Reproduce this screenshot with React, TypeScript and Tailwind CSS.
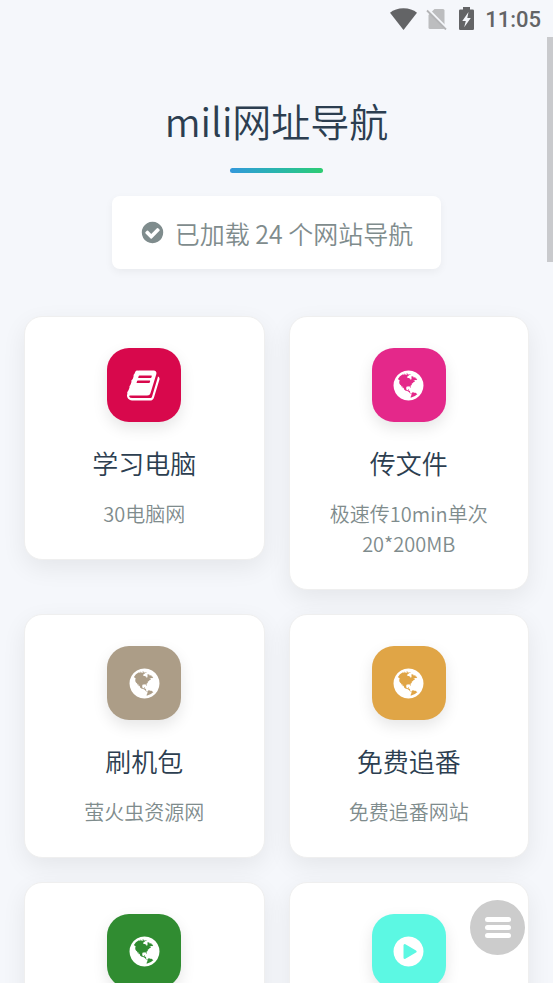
import React from "react";

type IconName = "book" | "globe" | "play" | "check";

const paths: Record<IconName, string> = {
  book: "M1639 478q40 57 18 129l-275 906q-19 64-76.5 107.5t-122.5 43.5h-923q-77 0-148.5-53.5t-99.5-131.5q-24-67-2-127 0-4 3-27t4-37q1-8-3-21.5t-3-19.5q2-11 8-21t16.5-23.5 16.5-23.5q23-38 45-91.5t30-91.5q3-10 .5-30t-.5-28q3-11 17-28t17-23q21-36 42-92t25-90q1-9-2.5-32t.5-28q4-13 22-30.5t22-22.5q19-26 42.5-84.5t27.5-96.5q1-8-3-25.5t-2-26.5q2-8 9-18t18-23 17-21q8-12 16.5-30.5t15-35 16-36 19.5-32 26.5-23.5 36-11.5 47.5 5.5l-1 3q38-9 51-9h761q74 0 114 56t18 130l-274 906q-36 119-71.5 153.5t-128.5 34.5h-869q-27 0-38 15-11 16-1 43 24 70 144 70h923q29 0 56-15.5t35-41.5l300-987q7-22 5-57 38 15 59 43zm-1064 2q-4 13 2 22.5t20 9.5h608q13 0 25.5-9.5t16.5-22.5l21-64q4-13-2-22.5t-20-9.5h-608q-13 0-25.5 9.5t-16.5 22.5zm-83 256q-4 13 2 22.5t20 9.5h608q13 0 25.5-9.5t16.5-22.5l21-64q4-13-2-22.5t-20-9.5h-608q-13 0-25.5 9.5t-16.5 22.5z",
  globe:
    "M896 128q209 0 385.5 103t279.5 279.5 103 385.5-103 385.5-279.5 279.5-385.5 103-385.5-103-279.5-279.5-103-385.5 103-385.5 279.5-279.5 385.5-103zm274 521q-2 1-9.5 9.5t-13.5 9.5q2 0 4.5-5t5-11 3.5-7q6-7 22-15 14-6 52-12 34-8 51 11-2-2 9.5-13t14.5-12q3-2 15-4.5t15-7.5l2-22q-12 1-17.5-7t-6.5-21q0 2-6 8 0-7-4.5-8t-11.5 1-9 1q-10-3-15-7.5t-8-16.5-4-15q-2-5-9.5-11t-9.5-10q-1-2-2.5-5.5t-3-6.5-4-5.5-5.5-2.5-7 5-7.5 10-4.5 5q-3-2-6-1.5t-4.5 1-4.5 3-5 3.5q-3 2-8.5 3t-8.5 2q15-5-1-11-10-4-16-3 9-4 7.5-12t-8.5-14h5q-1-4-8.5-8.5t-17.5-8.5-13-6q-8-5-34-9.5t-33-.5q-5 6-4.5 10.5t4 14 3.5 12.5q1 6-5.5 13t-6.5 12q0 7 14 15.5t10 21.5q-3 8-16 16t-16 12q-5 8-1.5 18.5t10.5 16.5q2 2 1.5 4t-3.5 4.5-5.5 4-6.5 3.5l-3 2q-11 5-20.5-6t-13.5-26q-7-25-16-30-23-8-29 1-5-13-41-26-25-9-58-4 6-1 0-15-7-15-19-12 3-6 4-17.5t1-13.5q3-13 12-23 1-1 7-8.5t9.5-13.5.5-6q35 4 50-11 5-5 11.5-17t10.5-17q9-6 14-5.5t14.5 5.5 14.5 5q14 1 15.5-11t-7.5-20q12 1 3-17-4-7-8-9-12-4-27 5-8 4 2 8-1-1-9.5 10.5t-16.5 17.5-16-5q-1-1-5.5-13.5t-9.5-13.5q-8 0-16 15 3-8-11-15t-24-8q19-12-8-27-7-4-20.5-5t-19.5 4q-5 7-5.5 11.5t5 8 10.5 5.5 11.5 4 8.5 3q14 10 8 14-2 1-8.5 3.5t-11.5 4.5-6 4q-3 4 0 14t-2 14q-5-5-9-17.5t-7-16.5q7 9-25 6l-10-1q-4 0-16 2t-20.5 1-13.5-8q-4-8 0-20 1-4 4-2-4-3-11-9.5t-10-8.5q-46 15-94 41 6 1 12-1 5-2 13-6.5t10-5.5q34-14 42-7l5-5q14 16 20 25-7-4-30-1-20 6-22 12 7 12 5 18-4-3-11.5-10t-14.5-11-15-5q-16 0-22 1-146 80-235 222 7 7 12 8 4 1 5 9t2.5 11 11.5-3q9 8 3 19 1-1 44 27 19 17 21 21 3 11-10 18-1-2-9-9t-9-4q-3 5 .5 18.5t10.5 12.5q-7 0-9.5 16t-2.5 35.5-1 23.5l2 1q-3 12 5.5 34.5t21.5 19.5q-13 3 20 43 6 8 8 9 3 2 12 7.5t15 10 10 10.5q4 5 10 22.5t14 23.5q-2 6 9.5 20t10.5 23q-1 0-2.5 1t-2.5 1q3 7 15.5 14t15.5 13q1 3 2 10t3 11 8 2q2-20-24-62-15-25-17-29-3-5-5.5-15.5t-4.5-14.5q2 0 6 1.5t8.5 3.5 7.5 4 2 3q-3 7 2 17.5t12 18.5 17 19 12 13q6 6 14 19.5t0 13.5q9 0 20 10.5t17 19.5q5 8 8 26t5 24q2 7 8.5 13.5t12.5 9.5l16 8 13 7q5 2 18.5 10.5t21.5 11.5q10 4 16 4t14.5-2.5 13.5-3.5q15-2 29 15t21 21q36 19 55 11-2 1 .5 7.5t8 15.5 9 14.5 5.5 8.5q5 6 18 15t18 15q6-4 7-9-3 8 7 20t18 10q14-3 14-32-31 15-49-18 0-1-2.5-5.5t-4-8.5-2.5-8.5 0-7.5 5-3q9 0 10-3.5t-2-12.5-4-13q-1-8-11-20t-12-15q-5 9-16 8t-16-9q0 1-1.5 5.5t-1.5 6.5q-13 0-15-1 1-3 2.5-17.5t3.5-22.5q1-4 5.5-12t7.5-14.5 4-12.5-4.5-9.5-17.5-2.5q-19 1-26 20-1 3-3 10.5t-5 11.5-9 7q-7 3-24 2t-24-5q-13-8-22.5-29t-9.5-37q0-10 2.5-26.5t3-25-5.5-24.5q3-2 9-9.5t10-10.5q2-1 4.5-1.5t4.5 0 4-1.5 3-6q-1-1-4-3-3-3-4-3 7 3 28.5-1.5t27.5 1.5q15 11 22-2 0-1-2.5-9.5t-.5-13.5q5 27 29 9 3 3 15.5 5t17.5 5q3 2 7 5.5t5.5 4.5 5-.5 8.5-6.5q10 14 12 24 11 40 19 44 7 3 11 2t4.5-9.5 0-14-1.5-12.5l-1-8v-18l-1-8q-15-3-18.5-12t1.5-18.5 15-18.5q1-1 8-3.5t15.5-6.5 12.5-8q21-19 15-35 7 0 11-9-1 0-5-3t-7.5-5-4.5-2q9-5 2-16 5-3 7.5-11t7.5-10q9 12 21 2 7-8 1-16 5-7 20.5-10.5t18.5-9.5q7 2 8-2t1-12 3-12q4-5 15-9t13-5l17-11q3-4 0-4 18 2 31-11 10-11-6-20 3-6-3-9.5t-15-5.5q3-1 11.5-.5t10.5-1.5q15-10-7-16-17-5-43 12zm-163 877q206-36 351-189-3-3-12.5-4.5t-12.5-3.5q-18-7-24-8 1-7-2.5-13t-8-9-12.5-8-11-7q-2-2-7-6t-7-5.5-7.5-4.5-8.5-2-10 1l-3 1q-3 1-5.5 2.5t-5.5 3-4 3 0 2.5q-21-17-36-22-5-1-11-5.5t-10.5-7-10-1.5-11.5 7q-5 5-6 15t-2 13q-7-5 0-17.5t2-18.5q-3-6-10.5-4.5t-12 4.5-11.5 8.5-9 6.5-8.5 5.5-8.5 7.5q-3 4-6 12t-5 11q-2-4-11.5-6.5t-9.5-5.5q2 10 4 35t5 38q7 31-12 48-27 25-29 40-4 22 12 26 0 7-8 20.5t-7 21.5q0 6 2 16z",
  play: "M896 128q209 0 385.5 103t279.5 279.5 103 385.5-103 385.5-279.5 279.5-385.5 103-385.5-103-279.5-279.5-103-385.5 103-385.5 279.5-279.5 385.5-103zm384 823q32-18 32-55t-32-55l-544-320q-31-19-64-1-32 19-32 56v640q0 37 32 56 16 8 32 8 17 0 32-9z",
  check:
    "M1412 734q0-28-18-46l-91-90q-19-19-45-19t-45 19l-408 407-226-226q-19-19-45-19t-45 19l-91 90q-18 18-18 46 0 27 18 45l362 362q19 19 45 19 27 0 46-19l543-543q18-18 18-45zm252 162q0 209-103 385.5t-279.5 279.5-385.5 103-385.5-103-279.5-279.5-103-385.5 103-385.5 279.5-279.5 385.5-103 385.5 103 279.5 279.5 103 385.5z",
};

function Icon({ name, className }: { name: IconName; className: string }) {
  return (
    <svg viewBox="0 0 1792 1792" fill="currentColor" className={className} aria-hidden="true">
      <path d={paths[name]} />
    </svg>
  );
}

interface Site {
  icon: IconName;
  tile: string;
  title?: string;
  desc?: string;
}

const sites: Site[] = [
  { icon: "book", tile: "bg-[#d8084c]", title: "学习电脑", desc: "30电脑网" },
  { icon: "globe", tile: "bg-[#e4288a]", title: "传文件", desc: "极速传10min单次20*200MB" },
  { icon: "globe", tile: "bg-[#ac9d87]", title: "刷机包", desc: "萤火虫资源网" },
  { icon: "globe", tile: "bg-[#e0a546]", title: "免费追番", desc: "免费追番网站" },
  { icon: "globe", tile: "bg-[#308c31]" },
  { icon: "play", tile: "bg-[#5cf8e3]" },
];

function StatusBar() {
  return (
    <div className="flex h-[37px] shrink-0 items-center justify-end pr-3 text-[#636466]">
      <svg viewBox="0 0 27 22" className="mr-[9px] h-[22px] w-[27px]" fill="currentColor" aria-hidden="true">
        <path d="M13.500 22L0 4.800C3.500 1.800 8 .2 13.500 .2S23.500 1.800 27 4.800z" />
      </svg>
      <svg viewBox="0 0 21 22" className="mr-3 h-[22px] w-[21px]" aria-hidden="true">
        <path d="M8.500 1H17a1.500 1.500 0 0 1 1.500 1.500V19.500a1.500 1.500 0 0 1-1.500 1.500H4a1.500 1.500 0 0 1-1.500-1.500V7z" fill="#bcbdbf" />
        <path d="M2.300 1.200L21 20.200" stroke="#f5f7fb" strokeWidth="2" />
        <path d="M1 2.500L20 21.500" stroke="#b3b4b6" strokeWidth="1.800" />
      </svg>
      <svg viewBox="0 0 15 23" className="mr-[11px] h-[23px] w-[15px]" fill="currentColor" aria-hidden="true">
        <path fillRule="evenodd" d="M4 0h7v2.500h2.800A1.200 1.200 0 0 1 15 3.700V21.800A1.200 1.200 0 0 1 13.800 23H1.200A1.200 1.200 0 0 1 0 21.800V3.700A1.200 1.200 0 0 1 1.200 2.500H4zM9.500 5L3.300 14H6.800L5.200 20.300L11.800 11H8.300z" />
      </svg>
      <span className="pt-[2px] font-[Roboto,sans-serif] text-[22px] leading-7 font-medium">11:05</span>
    </div>
  );
}

function SiteCard({ icon, tile, title, desc }: Site) {
  return (
    <a
      href="#"
      className="flex min-h-[244px] flex-col items-center rounded-[18px] border border-[#efefef] bg-white px-7 pt-[31px] pb-[30px] text-center shadow-[0_8px_24px_rgba(0,0,0,0.07)]"
    >
      <span className={`flex size-[74px] items-center justify-center rounded-[22px] text-white shadow-[0_6px_15px_rgba(0,0,0,0.1)] ${tile}`}>
        <Icon name={icon} className="size-[35px]" />
      </span>
      {title && <h2 className="mt-[21px] text-[26px] leading-[39px] text-[#2c3e50]">{title}</h2>}
      {desc && <p className="mt-[17px] text-[20px] leading-[30px] text-[#7f8c8d]">{desc}</p>}
    </a>
  );
}

export default function App() {
  return (
    <div className="flex h-screen flex-col overflow-hidden bg-[#f5f7fb] font-['Noto_Sans_CJK_SC',sans-serif] font-[350]">
      <StatusBar />
      <main className="relative min-h-0 flex-1 overflow-hidden">
        <header className="flex flex-col items-center pt-[54px]">
          <h1 className="text-[39px] leading-[58px] text-[#2c3e50]">mili网址导航</h1>
          <div className="mt-[19px] h-[5px] w-[93px] rounded-full bg-linear-to-r from-[#3498db] to-[#2ecc71]" />
          <p className="mt-[23px] flex h-[73px] items-center gap-[10px] rounded-lg bg-white px-7 text-[25px] leading-9 text-[#7f8c8d] shadow-[0_3px_8px_rgba(0,0,0,0.05)]">
            <Icon name="check" className="size-[25px]" />
            已加载 24 个网站导航
          </p>
        </header>
        <section className="mt-[47px] grid grid-cols-2 items-start gap-6 px-6">
          {sites.map((site, i) => (
            <SiteCard key={i} {...site} />
          ))}
        </section>
        <div className="absolute top-0 right-0 h-[225px] w-[6px] bg-[#c9cacd]" />
      </main>
      <button
        type="button"
        aria-label="菜单"
        className="fixed right-7 bottom-7 flex size-[55px] flex-col items-center justify-center gap-[3px] rounded-full bg-[#ccc]"
      >
        <span className="h-[5px] w-[26px] rounded-full bg-white" />
        <span className="h-[5px] w-[26px] rounded-full bg-white" />
        <span className="h-[5px] w-[26px] rounded-full bg-white" />
      </button>
    </div>
  );
}
